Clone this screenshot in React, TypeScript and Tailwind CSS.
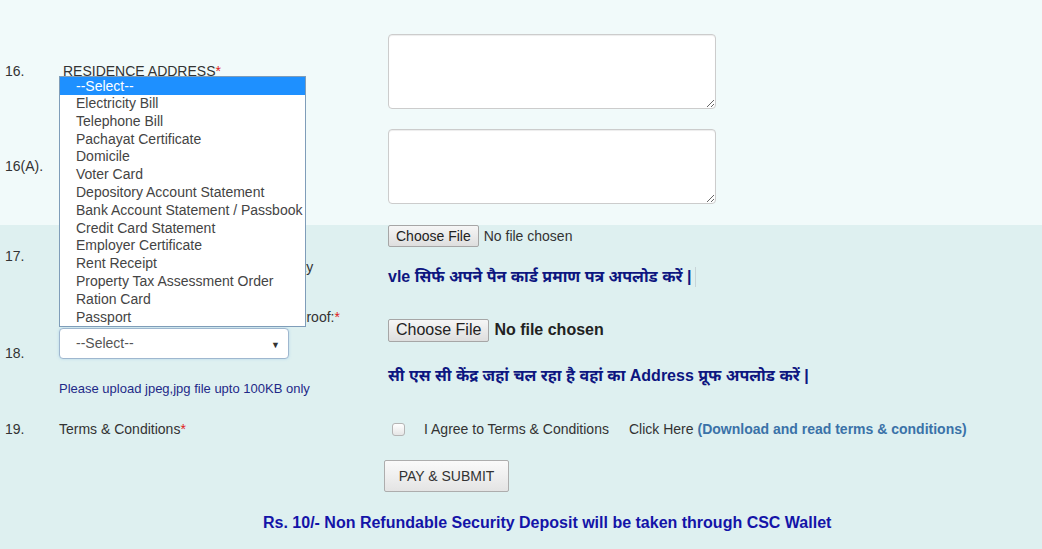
import React from "react"

const proofOptions = [
  "Electricity Bill",
  "Telephone Bill",
  "Pachayat Certificate",
  "Domicile",
  "Voter Card",
  "Depository Account Statement",
  "Bank Account Statement / Passbook",
  "Credit Card Statement",
  "Employer Certificate",
  "Rent Receipt",
  "Property Tax Assessment Order",
  "Ration Card",
  "Passport",
]

function Req() {
  return <span className="text-[#e02020]">*</span>
}

function FakeFile({ large }: { large?: boolean }) {
  if (large) {
    return (
      <div className="flex items-center text-[16px]">
        <span className="h-[23px] px-[7px] flex items-center border border-[#a6a6a6] rounded-[2px] bg-gradient-to-b from-[#f6f6f6] to-[#dedede] text-[#222]">
          Choose File
        </span>
        <span className="ml-[5px] font-bold text-[#222]">No file chosen</span>
      </div>
    )
  }
  return (
    <div className="flex items-center text-[14px]">
      <span className="h-[22px] px-[7px] flex items-center border border-[#a6a6a6] rounded-[2px] bg-gradient-to-b from-[#f6f6f6] to-[#dedede] text-[#222]">
        Choose File
      </span>
      <span className="ml-[5px] text-[#333]">No file chosen</span>
    </div>
  )
}

export default function App() {
  return (
    <div className="relative w-full min-h-[549px] font-['Liberation_Sans','Noto_Sans',Arial,sans-serif] text-[14px] text-[#333] bg-[#def0f0]">
      {/* top block */}
      <div className="bg-[#f1fafa] pt-[34px] pb-[21px] flex flex-col gap-[20px]">
        <div className="flex items-center">
          <div className="w-[59px] pl-[5px]">16.</div>
          <div className="w-[329px] pl-[4px] uppercase">
            Residence Address<Req />
          </div>
          <textarea className="w-[328px] h-[75px] bg-white border border-[#ccc] rounded-[4px] shadow-[inset_0_1px_1px_rgba(0,0,0,0.075)]" />
        </div>
        <div className="flex items-center">
          <div className="w-[59px] pl-[5px]">16(A).</div>
          <div className="w-[329px]" />
          <textarea className="w-[328px] h-[75px] bg-white border border-[#ccc] rounded-[4px] shadow-[inset_0_1px_1px_rgba(0,0,0,0.075)]" />
        </div>
      </div>

      {/* bottom block */}
      <div className="pb-[17px]">
        {/* 17 */}
        <div className="flex items-start">
          <div className="w-[59px] pl-[5px] self-center">17.</div>
          <div className="w-[329px] mt-[32px] leading-[20px] whitespace-nowrap">
            Upload PAN Card issued by I.T. Authority
          </div>
          <div className="flex flex-col">
            <FakeFile />
            <div className="mt-[20px] leading-[20px] flex items-center text-[16px] font-bold text-[#0d1680]">
              <span>vle सिर्फ अपने पैन कार्ड प्रमाण पत्र अपलोड करें |</span>
              <span className="ml-[4px] h-[20px] border-l border-[#c8d4d8]" />
            </div>
          </div>
        </div>

        {/* 18 */}
        <div className="flex items-start mt-[20px]">
          <div className="w-[59px] pl-[5px] self-center">18.</div>
          <div className="w-[329px] flex flex-col">
            <div className="leading-[20px] whitespace-nowrap">
              Select Documents for Centre Address Proof:<Req />
            </div>
            <div className="relative mt-px w-[230px] h-[31px] bg-white border border-[#9fb7cf] rounded-[4px] flex items-center pl-[16px] text-[#555] shadow-[0_0_3px_rgba(102,175,233,0.35)]">
              --Select--
              <span className="absolute right-[8px] top-[10px] text-[9px] text-[#333]">▼</span>
            </div>
            <div className="mt-[20px] leading-[20px] text-[13px] text-[#1f2a88]">
              Please upload jpeg,jpg file upto 100KB only
            </div>
          </div>
          <div className="flex flex-col mt-[11px]">
            <FakeFile large />
            <div className="mt-[24px] leading-[20px] text-[16px] font-bold text-[#0d1680]">
              सी एस सी केंद्र जहां चल रहा है वहां का Address प्रूफ अपलोड करें |
            </div>
          </div>
        </div>

        {/* 19 */}
        <div className="flex items-center mt-[20px] leading-[20px]">
          <div className="w-[59px] pl-[5px]">19.</div>
          <div className="w-[329px]">
            Terms &amp; Conditions<Req />
          </div>
          <div className="flex items-center">
            <span className="ml-[4px] w-[13px] h-[13px] rounded-[3px] border border-[#b5b5b5] bg-gradient-to-b from-white to-[#e6e6e6]" />
            <span className="ml-[19px]">I Agree to Terms &amp; Conditions</span>
            <span className="ml-[20px]">Click Here</span>
            <span className="ml-[4px] font-bold text-[#3a72a8]">(Download and read terms &amp; conditions)</span>
          </div>
        </div>

        <div className="mt-[21px] ml-[384px]">
          <button className="h-[32px] w-[125px] border border-[#adadad] rounded-[2px] bg-gradient-to-b from-[#fafafa] to-[#e4e4e4] text-[14px] text-[#333]">
            PAY &amp; SUBMIT
          </button>
        </div>

        <div className="mt-[21px] pl-[263px] leading-[20px] text-[16px] font-bold text-[#1414a8]">
          Rs. 10/- Non Refundable Security Deposit will be taken through CSC Wallet
        </div>
      </div>

      {/* open dropdown list of the select in row 18 */}
      <div className="absolute top-[76px] left-[59px] w-[247px] bg-white border border-[#7f9db9]">
        <div className="h-[18px] leading-[18px] pl-[16px] bg-[#1e90ff] text-white">--Select--</div>
        {proofOptions.map((o) => (
          <div key={o} className="h-[17.8px] leading-[17.8px] pl-[16px] text-[#444] whitespace-nowrap">
            {o}
          </div>
        ))}
      </div>
    </div>
  )
}
